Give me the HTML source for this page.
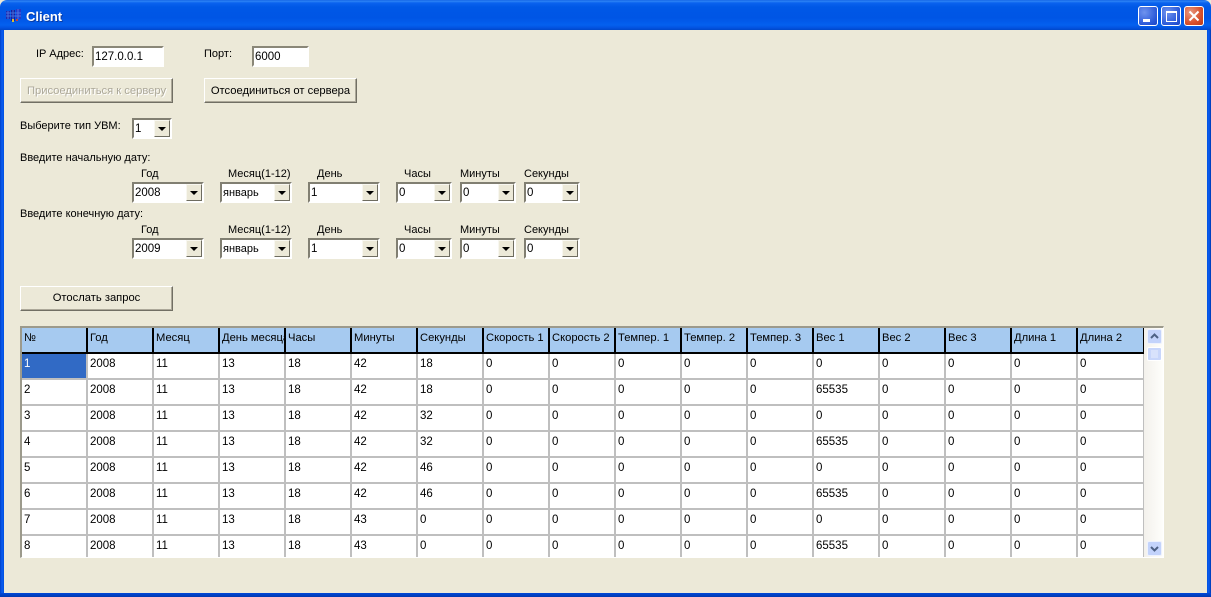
<!DOCTYPE html>
<html><head><meta charset="utf-8"><title>Client</title>
<style>
html,body{margin:0;padding:0;width:1211px;height:597px;overflow:hidden;background:#ece9d8}
body{position:relative;font-family:"Liberation Sans",sans-serif;font-size:11.5px;color:#000}
.a{position:absolute;white-space:nowrap}
.l{font-size:11px;margin-top:1px}
#tb{left:0;top:0;width:1211px;height:30px;border-radius:7px 7px 0 0;background:linear-gradient(#0a5ae0 0,#2f86f5 1px,#0a62ee 3px,#0058e6 7px,#0055e5 18px,#0460ef 25px,#0352df 28px,#0147c8 30px)}
#lb{left:0;top:30px;width:4px;height:567px;background:linear-gradient(90deg,#0040c8,#0a5cf0 50%,#0050e0)}
#rb{left:1207px;top:30px;width:4px;height:567px;background:linear-gradient(90deg,#0050e0,#0a5cf0 50%,#0038b0)}
#bb{left:0;top:593px;width:1211px;height:4px;background:linear-gradient(#0048d8,#0038b0)}
#t{left:26px;top:9px;color:#fff;font-weight:bold;font-size:13px;text-shadow:1px 1px 0 #0a3aa0}
.wb{width:18px;height:18px;border:1px solid #fff;border-radius:3px;top:6px;background:radial-gradient(circle at 30% 30%,#6f93ee,#2a58d8 70%,#1c44c4)}
#close{background:radial-gradient(circle at 30% 30%,#e89880,#d8502c 60%,#bb3a18)}
.in{background:#fff;box-sizing:border-box;border:2px solid;border-color:#8a8778 #fff #fff #8a8778;font-size:11.5px;line-height:18px;padding-left:1px}
.btn{box-sizing:border-box;width:153px;background:#ece9d8;border:1px solid;border-color:#fff #716f64 #716f64 #fff;box-shadow:inset -1px -1px 0 #aca899;text-align:center;font-size:11.2px}
.cb{box-sizing:border-box;height:21px;background:#fff;border:2px solid;border-color:#817f72 #fff #fff #817f72;line-height:19px;padding-left:1px;font-size:11.5px}
.cb b{position:absolute;right:0;top:0;width:16px;height:17px;box-sizing:border-box;background:#ece9d8;border:1px solid;border-color:#f8f7f0 #6e6c60 #6e6c60 #f8f7f0}
.cb b::after{content:"";position:absolute;left:3px;top:6px;border:4px solid transparent;border-top:4px solid #000;border-bottom:0}
.sm{font-size:11px}
#grid{left:22px;top:328px;width:1122px;height:229px;background:#bfbfbf;overflow:hidden}
#outer{left:20px;top:326px;width:1144px;height:232px;box-sizing:border-box;border-top:2px solid #9c9a8c;border-left:2px solid #9c9a8c;border-right:1px solid #fff;border-bottom:1px solid #fff}
.r{display:grid;grid-template-columns:repeat(17,64px);column-gap:2px;height:24px;margin-bottom:2px;width:1122px}
.h{background:#000;height:26px;margin:0}
.r span{background:#fff;height:24px;line-height:20px;padding-left:2px;box-sizing:border-box;overflow:hidden;white-space:nowrap}
.r span:last-child{width:65px}
.h span{background:#a6caf0;line-height:21px;font-size:11.2px}
.r span.sel{background:#316ac5;color:#fff}
#sb{left:1144px;top:328px;width:19px;height:229px;background:linear-gradient(90deg,#f3f1ec,#fefefb)}
.sbb{left:1147px;width:15px;height:15px;box-sizing:border-box;border:1px solid #eef2fd;border-radius:2px;background:#c3d3fb}
</style></head><body>
<div class="a" id="tb"></div><div class="a" id="lb"></div><div class="a" id="rb"></div><div class="a" id="bb"></div>
<svg class="a" style="left:5px;top:9px" width="17" height="14" viewBox="0 0 17 14"><rect x="1" y="2" width="4" height="8" fill="#1a2ab0"/><rect x="6" y="1" width="4" height="11" fill="#1520a0"/><rect x="11" y="0" width="5" height="10" fill="#2438c8"/><path d="M1 4h15M1 7h15M3 2v8M8 1v11M13 0v10" stroke="#5f90ef" stroke-width="1" opacity=".7"/><rect x="7" y="10" width="2" height="3" fill="#d8c030"/><rect x="11" y="10" width="2" height="2" fill="#c04040"/></svg>
<div class="a" id="t">Client</div>
<div class="a wb" style="left:1138px"><svg width="18" height="18"><rect x="4" y="12" width="7" height="3" fill="#fff"/></svg></div>
<div class="a wb" style="left:1161px"><svg width="18" height="18"><rect x="4.5" y="4.5" width="10" height="10" fill="none" stroke="#fff"/><rect x="4" y="4" width="11" height="2" fill="#fff"/></svg></div>
<div class="a wb" id="close" style="left:1184px"><svg width="18" height="18"><path d="M4.5 4.5l9 9M13.5 4.5l-9 9" stroke="#fff" stroke-width="2"/></svg></div>

<div class="a l" style="left:36px;top:47px">IP Адрес:</div>
<div class="a in" style="left:92px;top:46px;width:72px;height:21px">127.0.0.1</div>
<div class="a l" style="left:204px;top:47px">Порт:</div>
<div class="a in" style="left:252px;top:46px;width:57px;height:21px">6000</div>
<div class="a btn" style="left:20px;top:78px;height:25px;line-height:24px;color:#aca899;text-shadow:1px 1px 0 #fff">Присоединиться к серверу</div>
<div class="a btn" style="left:204px;top:78px;height:25px;line-height:24px">Отсоединиться от сервера</div>
<div class="a l" style="left:20px;top:119px">Выберите тип УВМ:</div>
<div class="a cb" style="left:132px;top:118px;width:40px">1<b></b></div>

<div class="a l" style="left:20px;top:151px">Введите начальную дату:</div>
<div class="a l" style="left:141px;top:167px">Год</div>
<div class="a l" style="left:228px;top:167px">Месяц(1-12)</div>
<div class="a l" style="left:317px;top:167px">День</div>
<div class="a l" style="left:404px;top:167px">Часы</div>
<div class="a l" style="left:460px;top:167px">Минуты</div>
<div class="a l" style="left:524px;top:167px">Секунды</div>
<div class="a cb" style="left:132px;top:182px;width:72px">2008<b></b></div>
<div class="a cb sm" style="left:220px;top:182px;width:72px">январь<b></b></div>
<div class="a cb" style="left:308px;top:182px;width:72px">1<b></b></div>
<div class="a cb" style="left:396px;top:182px;width:56px">0<b></b></div>
<div class="a cb" style="left:460px;top:182px;width:56px">0<b></b></div>
<div class="a cb" style="left:524px;top:182px;width:56px">0<b></b></div>

<div class="a l" style="left:20px;top:207px">Введите конечную дату:</div>
<div class="a l" style="left:141px;top:223px">Год</div>
<div class="a l" style="left:228px;top:223px">Месяц(1-12)</div>
<div class="a l" style="left:317px;top:223px">День</div>
<div class="a l" style="left:404px;top:223px">Часы</div>
<div class="a l" style="left:460px;top:223px">Минуты</div>
<div class="a l" style="left:524px;top:223px">Секунды</div>
<div class="a cb" style="left:132px;top:238px;width:72px">2009<b></b></div>
<div class="a cb sm" style="left:220px;top:238px;width:72px">январь<b></b></div>
<div class="a cb" style="left:308px;top:238px;width:72px">1<b></b></div>
<div class="a cb" style="left:396px;top:238px;width:56px">0<b></b></div>
<div class="a cb" style="left:460px;top:238px;width:56px">0<b></b></div>
<div class="a cb" style="left:524px;top:238px;width:56px">0<b></b></div>

<div class="a btn" style="left:20px;top:286px;height:25px;line-height:23px">Отослать запрос</div>

<div class="a" id="outer"></div>
<div class="a" id="grid">
<div class="r h"><span>№</span><span>Год</span><span>Месяц</span><span>День месяца</span><span>Часы</span><span>Минуты</span><span>Секунды</span><span>Скорость 1</span><span>Скорость 2</span><span>Темпер. 1</span><span>Темпер. 2</span><span>Темпер. 3</span><span>Вес 1</span><span>Вес 2</span><span>Вес 3</span><span>Длина 1</span><span>Длина 2</span></div>
<div class="r"><span class="sel">1</span><span>2008</span><span>11</span><span>13</span><span>18</span><span>42</span><span>18</span><span>0</span><span>0</span><span>0</span><span>0</span><span>0</span><span>0</span><span>0</span><span>0</span><span>0</span><span>0</span></div>
<div class="r"><span>2</span><span>2008</span><span>11</span><span>13</span><span>18</span><span>42</span><span>18</span><span>0</span><span>0</span><span>0</span><span>0</span><span>0</span><span>65535</span><span>0</span><span>0</span><span>0</span><span>0</span></div>
<div class="r"><span>3</span><span>2008</span><span>11</span><span>13</span><span>18</span><span>42</span><span>32</span><span>0</span><span>0</span><span>0</span><span>0</span><span>0</span><span>0</span><span>0</span><span>0</span><span>0</span><span>0</span></div>
<div class="r"><span>4</span><span>2008</span><span>11</span><span>13</span><span>18</span><span>42</span><span>32</span><span>0</span><span>0</span><span>0</span><span>0</span><span>0</span><span>65535</span><span>0</span><span>0</span><span>0</span><span>0</span></div>
<div class="r"><span>5</span><span>2008</span><span>11</span><span>13</span><span>18</span><span>42</span><span>46</span><span>0</span><span>0</span><span>0</span><span>0</span><span>0</span><span>0</span><span>0</span><span>0</span><span>0</span><span>0</span></div>
<div class="r"><span>6</span><span>2008</span><span>11</span><span>13</span><span>18</span><span>42</span><span>46</span><span>0</span><span>0</span><span>0</span><span>0</span><span>0</span><span>65535</span><span>0</span><span>0</span><span>0</span><span>0</span></div>
<div class="r"><span>7</span><span>2008</span><span>11</span><span>13</span><span>18</span><span>43</span><span>0</span><span>0</span><span>0</span><span>0</span><span>0</span><span>0</span><span>0</span><span>0</span><span>0</span><span>0</span><span>0</span></div>
<div class="r"><span>8</span><span>2008</span><span>11</span><span>13</span><span>18</span><span>43</span><span>0</span><span>0</span><span>0</span><span>0</span><span>0</span><span>0</span><span>65535</span><span>0</span><span>0</span><span>0</span><span>0</span></div>
</div>
<div class="a" id="sb"></div>
<div class="a sbb" style="top:329px"><svg width="13" height="13" style="display:block"><path d="M3 8l3.5-3.5L10 8" fill="none" stroke="#4d6185" stroke-width="2"/></svg></div>
<div class="a sbb" style="top:347px;height:14px;background:#c8d6fb;border-color:#fff"><svg width="13" height="12" style="display:block"><path d="M3 3h7M3 5h7M3 7h7M3 9h7" stroke="#e8eefd" stroke-width="1"/></svg></div>
<div class="a sbb" style="top:541px"><svg width="13" height="13" style="display:block"><path d="M3 5l3.5 3.5L10 5" fill="none" stroke="#4d6185" stroke-width="2"/></svg></div>
</body></html>
